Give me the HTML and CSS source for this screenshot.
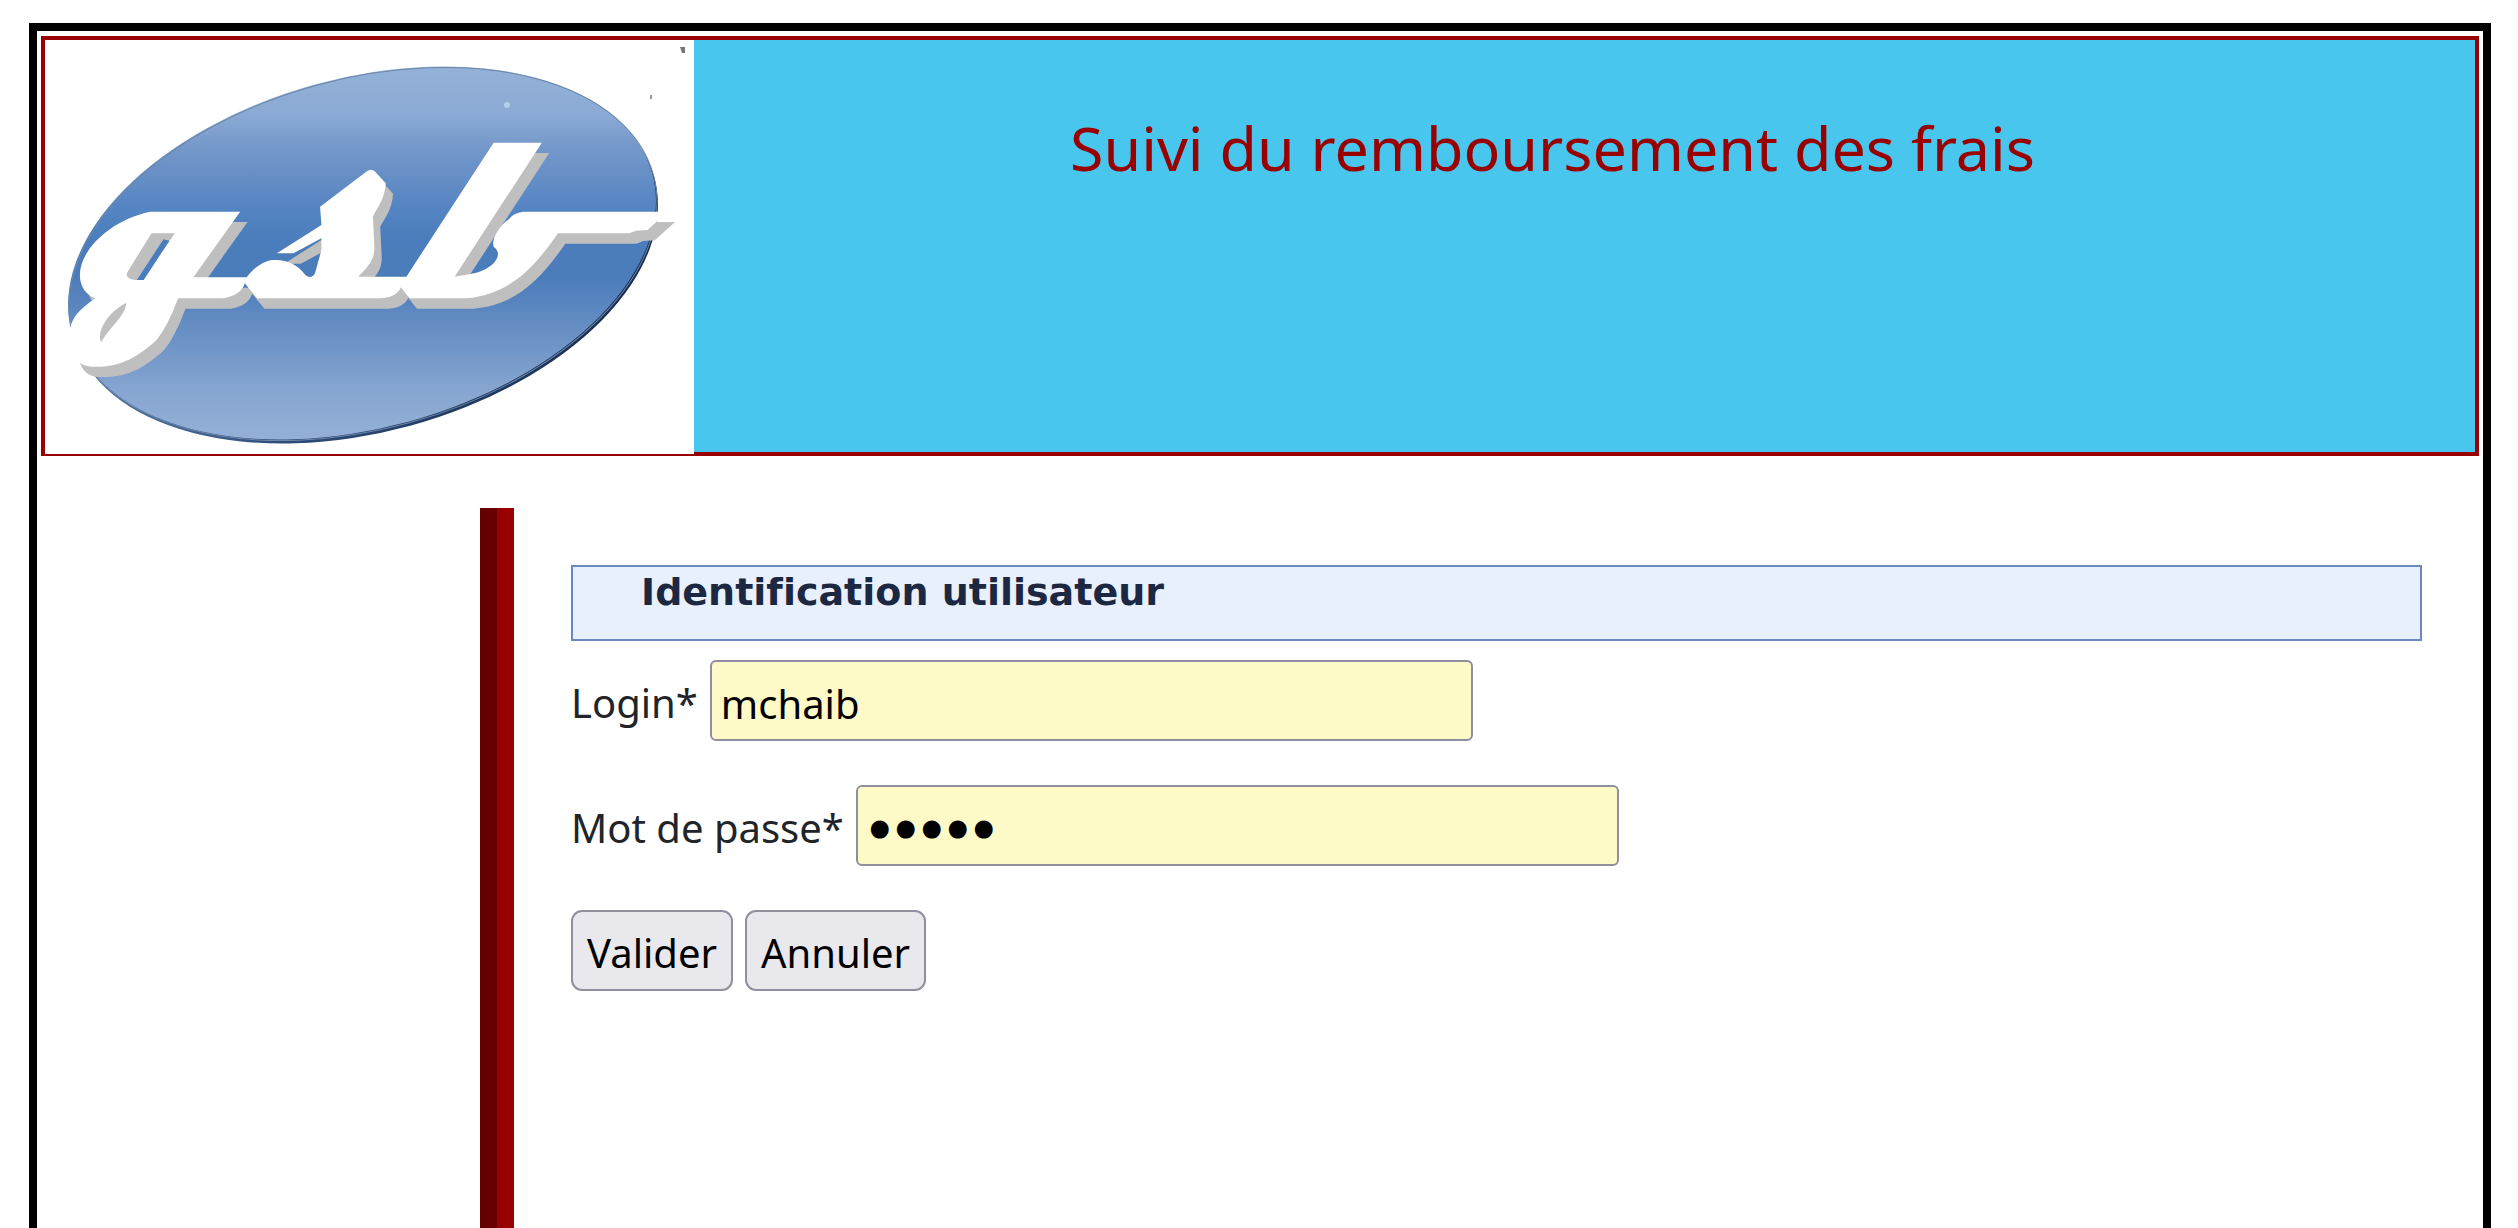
FILE: index.html
```html
<!DOCTYPE html>
<html lang="fr">
<head>
<meta charset="utf-8">
<title>Suivi du remboursement des frais</title>
<link rel="stylesheet" href="styles.css">
</head>
<body>
<div class="page">
  <header class="banner">
    <svg class="logo" viewBox="0 0 649 414" role="img" aria-label="gsb">
      <defs>
        <linearGradient id="sky" x1="0" y1="27" x2="0" y2="403" gradientUnits="userSpaceOnUse">
          <stop offset="0" stop-color="#94b2d8"/>
          <stop offset=".13" stop-color="#8aa9d4"/>
          <stop offset=".22" stop-color="#7397c9"/>
          <stop offset=".38" stop-color="#5484c2"/>
          <stop offset=".46" stop-color="#4b7dbc"/>
          <stop offset=".56" stop-color="#4b7cba"/>
          <stop offset=".76" stop-color="#7397c9"/>
          <stop offset=".85" stop-color="#85a4cf"/>
          <stop offset="1" stop-color="#94b2d8"/>
        </linearGradient>
        <linearGradient id="rim" x1="0" y1="0" x2="1" y2="0">
          <stop offset="0" stop-color="#5578a8"/>
          <stop offset=".3" stop-color="#2b4a76"/>
          <stop offset="1" stop-color="#14284a"/>
        </linearGradient>
        <clipPath id="oval"><ellipse cx="317" cy="213" rx="301" ry="175" transform="rotate(-15.3 317 213)"/></clipPath>
        <path id="word" d="M523 635H327C240 660 174 750 174 825C174 865 190 885 208 895C170 930 152 960 152 1000C152 1060 165 1100 203 1100C250 1102 290 1085 341 1020Q365 980 388 895H486C510 890 528 875 533 850L560 895H830C855 892 868 880 873 862L892 895H1015C1110 885 1165 800 1215 700H1370L1385 692L1410 690L1454 635H1140C1125 638 1115 645 1108 658C1085 680 1070 720 1075 740C1090 755 1085 775 1075 790C1060 808 1045 818 1025 822L990 830L1180 428H1075L885 830H780C810 790 817 770 815 730L812 650C820 625 838 600 840 550L816 514Q808 504 799 514L697 620L700 675L603 760H639L700 715L700 750L686 820Q678 840 665 825C650 795 625 778 595 780C570 782 550 810 537 832H421Z"/>
      </defs>
      <ellipse cx="319" cy="217" rx="301" ry="175" transform="rotate(-15.3 319 217)" fill="url(#rim)"/>
      <rect width="649" height="414" fill="url(#sky)" clip-path="url(#oval)"/>
      <ellipse cx="318" cy="214" rx="301" ry="175" transform="rotate(-15.3 318 214)" fill="none" stroke="#6d86a8"/>
      <g transform="translate(-45 -40) scale(.4592 .3333)">
        <use href="#word" x="16" y="31" fill="#bfbfbf"/>
        <use href="#word" fill="#fff"/>
        <path d="M330 700H381L309 840H294Q270 835 278 815ZM275 908C272 950 245 970 220 1027C210 995 232 940 275 908Z" fill="#bfbfbf"/>
        <path d="M356 718L369 722L313 840H298Z" fill="#4a7dbd"/>
      </g>
      <circle cx="462" cy="65" r="3" fill="#b4d0e8"/>
      <path d="M635 7h5v6h-3z" fill="#777"/>
      <path d="M605 55h2v4h-2z" fill="#999"/>
    </svg>
    <h1 class="banner-title">Suivi du remboursement des frais</h1>
  </header>
  <main class="content">
    <h2 class="section-title">Identification utilisateur</h2>
    <form class="login-form">
      <div class="field">
        <label class="label" for="login">Login*</label>
        <input class="text-box" id="login" name="login" type="text" value="mchaib">
      </div>
      <div class="field">
        <label class="label" for="mdp">Mot de passe*</label>
        <input class="text-box password" id="mdp" name="mdp" type="password" value="abcde">
      </div>
      <div class="field">
        <button class="button" type="submit">Valider</button>
        <button class="button" type="reset">Annuler</button>
      </div>
    </form>
  </main>
</div>
</body>
</html>
```
FILE: styles.css
```css
* {
  box-sizing: border-box;
}

body {
  display: flex;
  flex-direction: column;
  min-height: 100vh;
  margin: 0;
  padding: 23px 27px 0 29px;
  background: #fff;
  color: #212529;
  font-family: "Segoe UI", "Noto Sans", sans-serif;
  font-size: 40px;
  line-height: 66px;
}

.page {
  flex: 1;
  padding: 5px 4px 0;
  border: 8px solid #000;
  border-bottom: 0;
  display: flex;
  flex-direction: column;
}

.banner {
  display: flex;
  align-items: flex-start;
  border: 4px solid #990000;
  background: #49c6ee;
}

.logo {
  flex: none;
  width: 649px;
  height: 414px;
  margin-bottom: -2px;
  background: #fff;
}

.banner-title {
  flex: 1;
  margin: 64px 64px 0 0;
  color: #990000;
  font-size: 61px;
  font-weight: 400;
  line-height: 88px;
  text-align: center;
}

.content {
  flex: 1;
  margin: 52px 57px 0 439px;
  padding: 57px 0 0 74px;
  border-left: 17px solid #660000;
  box-shadow: inset 17px 0 #990000;
}

.section-title {
  height: 76px;
  margin: 0 0 19px;
  padding-left: 68px;
  border: 2px solid #6a89bf;
  background: #e8f0fe;
  color: #1c2742;
  font-family: Verdana, "DejaVu Sans", sans-serif;
  font-size: 38px;
  font-variant-ligatures: none;
  font-weight: 700;
  line-height: 50px;
}

.login-form {
  display: flex;
  flex-direction: column;
  gap: 44px;
}

.field {
  display: flex;
  align-items: center;
  gap: 12px;
}

.label {
  padding-top: 5px;
}

.text-box,
.button {
  height: 81px;
  border: 2px solid #8f8f9d;
  color: #000;
  font: inherit;
}

.text-box {
  width: 763px;
  padding: 5px 9px 0;
  border-radius: 6px;
  background: #fefac7;
}

.password {
  padding-top: 9px;
  font-family: "DejaVu Sans", sans-serif;
  font-size: 44px;
  -webkit-text-stroke: 5px #000;
}

.button {
  padding: 5px 14px 0;
  border-radius: 11px;
  background: #e9e9ed;
}
```
